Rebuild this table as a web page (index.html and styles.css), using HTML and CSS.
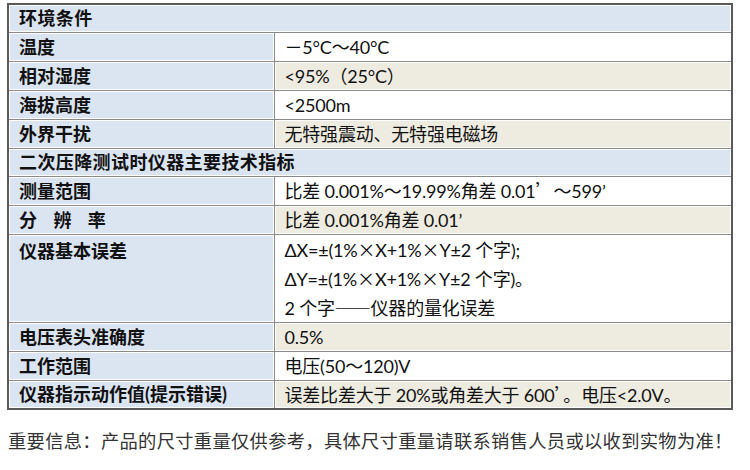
FILE: index.html
```html
<!DOCTYPE html>
<html lang="zh">
<head>
<meta charset="utf-8">
<link rel="stylesheet" href="styles.css">
</head>
<body>
<table class="spec">
  <tr class="sec"><td colspan="2">环境条件</td></tr>
  <tr><td class="k">温度</td><td class="v w"><span class="cj">－</span>5°C～40°C</td></tr>
  <tr><td class="k">相对湿度</td><td class="v b">&lt;95%<span class="cj">（</span>25°C<span class="cj">）</span></td></tr>
  <tr><td class="k">海拔高度</td><td class="v w">&lt;2500m</td></tr>
  <tr><td class="k">外界干扰</td><td class="v b">无特强震动、无特强电磁场</td></tr>
  <tr class="sec"><td colspan="2">二次压降测试时仪器主要技术指标</td></tr>
  <tr><td class="k">测量范围</td><td class="v w">比差 0.001%～19.99%角差 0.01<span class="cj">’</span>～599’</td></tr>
  <tr><td class="k"><span class="spread">分　辨　率</span></td><td class="v b">比差 0.001%角差 0.01’</td></tr>
  <tr class="tall"><td class="k top">仪器基本误差</td><td class="v w"><div class="ln">ΔX=±(1%<span class="cj">×</span>X+1%<span class="cj">×</span>Y±2 个字);</div><div class="ln">ΔY=±(1%<span class="cj">×</span>X+1%<span class="cj">×</span>Y±2 个字)。</div><div class="ln">2 个字<span class="cj">——</span>仪器的量化误差</div></td></tr>
  <tr><td class="k">电压表头准确度</td><td class="v b">0.5%</td></tr>
  <tr><td class="k">工作范围</td><td class="v w">电压(50～120)V</td></tr>
  <tr><td class="k">仪器指示动作值(提示错误)</td><td class="v b">误差比差大于 20%或角差大于 600<span class="cj">’</span>。电压&lt;2.0V。</td></tr>
</table>
<p class="note">重要信息：产品的尺寸重量仅供参考，具体尺寸重量请联系销售人员或以收到实物为准！</p>
</body>
</html>
```
FILE: styles.css
```css
html, body {
  margin: 0;
  padding: 0;
  background: #fff;
}
body {
  padding: 3px 0 0 7px;
  font-family: Lato, "Noto Sans CJK SC", sans-serif;
  color: #111;
}
.spec {
  border-collapse: collapse;
  width: 726px;
  border: 2px solid #5a5a5a;
}
.spec td {
  border: 1px solid #8a8a8a;
  height: 29px;
  padding: 0 0 0 10px;
  box-sizing: border-box;
  font-size: 18px;
  line-height: 22px;
  vertical-align: middle;
  box-shadow: inset 1px 1px 0 #fff, inset -1px -1px 0 #fff;
  white-space: nowrap;
}
.sec td {
  background: #dbe5f1;
  font-weight: 700;
  font-size: 18px;
  letter-spacing: 0.4px;
  height: 28px;
}
.k {
  width: 266px;
  background: #dbe5f1;
  font-weight: 700;
}
.spread {
  letter-spacing: -0.8px;
}
.v {
  font-weight: 400;
  letter-spacing: -0.2px;
}
.cj {
  font-family: "Noto Sans CJK SC", sans-serif;
}
.v.w { background: #fff; }
.v.b { background: #eeece1; }
.tall td { height: 87px; }
.spec td.k.top { vertical-align: top; padding-top: 5px; }
.ln {
  height: 29px;
  line-height: 29px;
}
.note {
  margin: 17px 0 0 1px;
  font-size: 18.3px;
  color: #333;
  font-family: "Noto Sans CJK SC", sans-serif;
  letter-spacing: 0.3px;
  white-space: nowrap;
}
```
